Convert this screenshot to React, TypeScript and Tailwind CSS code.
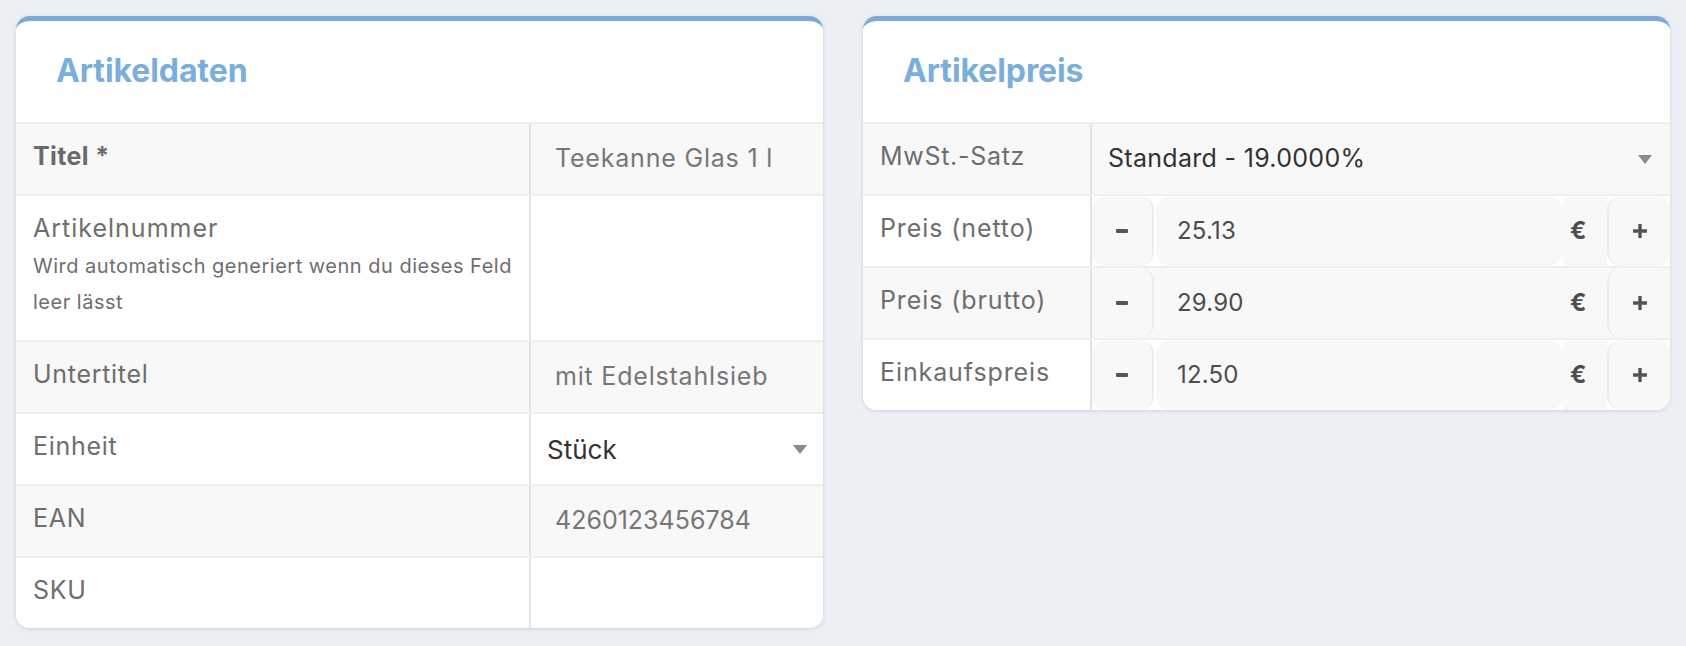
import React from "react";

const font = { fontFamily: "Inter, 'Noto Sans', sans-serif" };

function Caret() {
  return (
    <svg width="14" height="9" viewBox="0 0 14 9" className="shrink-0">
      <path d="M0 0h14L7 9z" fill="#8a8a8a" />
    </svg>
  );
}

function Card({ title, children }: { title: string; children: React.ReactNode }) {
  return (
    <div className="flex-1 overflow-hidden rounded-[14px] border-t-[5px] border-[#7aabd8] bg-white shadow-[0_1px_4px_rgba(0,0,0,0.12)]">
      <div className="flex h-[101px] items-center pl-10 pb-[1px]">
        <h2 className="text-[32px] font-bold tracking-[-0.1px] text-[#7aaedb]">{title}</h2>
      </div>
      <div>{children}</div>
    </div>
  );
}

type Row = {
  label: string;
  bold?: boolean;
  hint?: string;
  value?: string;
  select?: boolean;
  gray?: boolean;
  digits?: boolean;
};

const dataRows: Row[] = [
  { label: "Titel *", bold: true, value: "Teekanne Glas 1 l", gray: true },
  { label: "Artikelnummer", hint: "Wird automatisch generiert wenn du dieses Feld leer lässt" },
  { label: "Untertitel", value: "mit Edelstahlsieb", gray: true },
  { label: "Einheit", value: "Stück", select: true },
  { label: "EAN", value: "4260123456784", gray: true, digits: true },
  { label: "SKU" },
];

function DataRow({ row }: { row: Row }) {
  const bg = row.gray ? "bg-[#f8f8f8]" : "bg-white";
  return (
    <div className={`flex border-t-2 border-[#eeeff1] ${bg}`}>
      <div className="w-[515px] shrink-0 border-r-2 border-[#e3e3e3] pl-[17px] pr-[8px]">
        {row.hint ? (
          <div className="pt-[15px] pb-[20px]">
            <div className="text-[25px] leading-[34px] tracking-[1px] text-[#6e6e6e]">{row.label}</div>
            <div className="mt-[3px] text-[20px] leading-[36px] tracking-[0.5px] text-[#6e6e6e]">{row.hint}</div>
          </div>
        ) : (
          <div
            className={`flex h-[70px] items-center pb-[4px] text-[25px] ${
              row.bold ? "font-bold tracking-[0.4px] text-[#6a6a6a]" : "tracking-[0.7px] text-[#6e6e6e]"
            }`}
          >
            {row.label}
          </div>
        )}
      </div>
      <div className="flex min-w-0 flex-1 items-center">
        {row.select ? (
          <div className="flex h-[70px] flex-1 items-center justify-between pl-4 pr-4">
            <span className="text-[26px] text-[#333]">{row.value}</span>
            <Caret />
          </div>
        ) : (
          <div
            className={`flex h-[70px] items-center whitespace-nowrap pl-6 text-[25px] text-[#777] ${
              row.digits ? "tracking-[0px]" : "tracking-[0.8px]"
            }`}
          >
            {row.value}
          </div>
        )}
      </div>
    </div>
  );
}

const priceRows = [
  { label: "Preis (netto)", value: "25.13" },
  { label: "Preis (brutto)", value: "29.90", gray: true },
  { label: "Einkaufspreis", value: "12.50" },
];

function Minus() {
  return <span className="block h-[4px] w-[12px] rounded-[1px] bg-[#555]" />;
}

function Plus() {
  return (
    <svg width="14" height="14" viewBox="0 0 14 14">
      <path d="M5.3 0h3.4v5.3H14v3.4H8.7V14H5.3V8.7H0V5.3h5.3z" fill="#555" />
    </svg>
  );
}

function PriceRow({ label, value, gray }: { label: string; value: string; gray?: boolean }) {
  return (
    <div className={`flex h-[72px] border-t-2 border-[#eeeff1] ${gray ? "bg-[#f8f8f8]" : "bg-white"}`}>
      <div className="flex w-[229px] shrink-0 items-center border-r-2 border-[#e3e3e3] pl-[17px] pb-[4px] text-[25px] tracking-[0.9px] text-[#6e6e6e]">
        {label}
      </div>
      <div className="flex flex-1 items-stretch">
        <button className="flex w-[62px] items-center justify-center rounded-[14px] border-r-2 border-[#ececec] bg-[#f8f8f8]">
          <Minus />
        </button>
        <div className="ml-[2px] flex flex-1 items-center rounded-[14px] bg-[#f8f8f8] pl-[21px] text-[24px] tracking-[0.2px] text-[#4d4d4d]">
          {value}
        </div>
        <div className="flex w-[44px] items-center bg-[#f8f8f8] pl-[7px] text-[24px] font-bold text-[#4d4d4d]">
          €
        </div>
        <button className="flex w-[63px] items-center justify-center rounded-[14px] border-l-2 border-[#ececec] bg-[#f8f8f8]">
          <Plus />
        </button>
      </div>
    </div>
  );
}

export default function App() {
  return (
    <div className="flex min-h-[646px] items-start gap-10 bg-[#eceff3] px-4 pt-4" style={font}>
      <Card title="Artikeldaten">
        {dataRows.map((r) => (
          <DataRow key={r.label} row={r} />
        ))}
      </Card>
      <Card title="Artikelpreis">
        <div className="flex h-[72px] border-t-2 border-[#eeeff1] bg-[#f8f8f8]">
          <div className="flex w-[229px] shrink-0 items-center border-r-2 border-[#e3e3e3] pl-[17px] pb-[4px] text-[25px] tracking-[0.7px] text-[#6e6e6e]">
            MwSt.-Satz
          </div>
          <div className="flex flex-1 items-center justify-between pl-[16px] pr-[18px]">
            <span className="text-[25px] tracking-[0.3px] text-[#333]">Standard - 19.0000%</span>
            <Caret />
          </div>
        </div>
        {priceRows.map((r) => (
          <PriceRow key={r.label} {...r} />
        ))}
      </Card>
    </div>
  );
}
